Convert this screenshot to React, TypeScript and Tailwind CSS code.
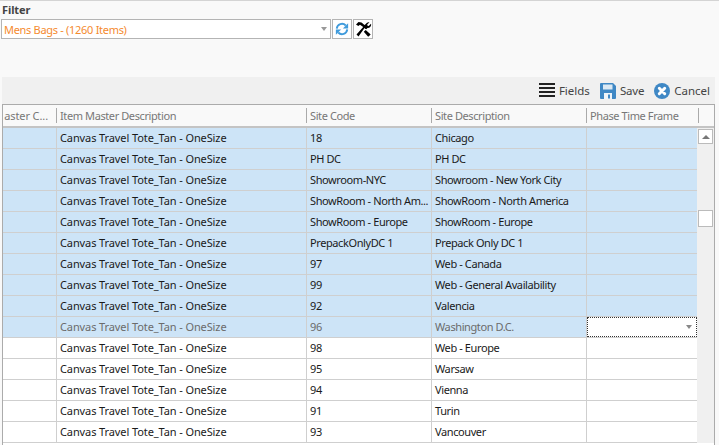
import React from "react";

const rows: [string, string, number][] = [
  ["18", "Chicago", 1],
  ["PH DC", "PH DC", 1],
  ["Showroom-NYC", "Showroom - New York City", 1],
  ["ShowRoom - North Am...", "ShowRoom - North America", 1],
  ["ShowRoom - Europe", "ShowRoom - Europe", 1],
  ["PrepackOnlyDC 1", "Prepack Only DC 1", 1],
  ["97", "Web - Canada", 1],
  ["99", "Web - General Availability", 1],
  ["92", "Valencia", 1],
  ["96", "Washington D.C.", 2],
  ["98", "Web - Europe", 0],
  ["95", "Warsaw", 0],
  ["94", "Vienna", 0],
  ["91", "Turin", 0],
  ["93", "Vancouver", 0],
];

function Refresh() {
  return (
    <svg width="14" height="14" viewBox="0 0 16 16" fill="none">
      <path d="M2 7.500A6 6 0 0 1 12.300 4" stroke="#3f9bdc" strokeWidth="2.200" />
      <path d="M14 8.500A6 6 0 0 1 3.700 12" stroke="#3f9bdc" strokeWidth="2.200" />
      <path d="M15 1.500v6h-6z" fill="#3f9bdc" />
      <path d="M1 14.500v-6h6z" fill="#3f9bdc" />
    </svg>
  );
}

function Tools() {
  return (
    <svg width="17" height="17" viewBox="0 0 17 17" fill="#000">
      <path d="M1 3.500 3.500 1l3 .5 3 2.500 1.500-1 1.200 1.200-1 1 1 1-1.700 1.700-1-1L3.500 15.500 1.500 13.500 8.200 6 5 3.700 3.300 5z" />
      <path d="M16 2.800 13.700 5l-1.200-.3-.3-1.200L14.500 1.200A3.300 3.300 0 0 0 10.600 4.800L9.200 6.300l2 2 1.300-1.300A3.300 3.300 0 0 0 16 2.800z" />
      <path d="M8.800 10.800l4.400 5 2.500-2.300-5-4.600z" />
    </svg>
  );
}

function Lines() {
  return (
    <svg width="16" height="15" viewBox="0 0 16 15" fill="#222">
      <rect x="0" y="0" width="16" height="2" />
      <rect x="0" y="4" width="16" height="2" />
      <rect x="0" y="8" width="16" height="2" />
      <rect x="0" y="12" width="16" height="2" />
    </svg>
  );
}

function Disk() {
  return (
    <svg width="16" height="16" viewBox="0 0 16 16">
      <path d="M1 0h12l3 3v12a1 1 0 0 1-1 1H1a1 1 0 0 1-1-1V1a1 1 0 0 1 1-1z" fill="#3f88c5" />
      <rect x="3" y="1.500" width="9.500" height="5" fill="#dbe9f4" />
      <rect x="4" y="10" width="8" height="6" fill="#eef4f9" />
      <rect x="8" y="11.500" width="2" height="4" fill="#3f88c5" />
    </svg>
  );
}

function Cancel() {
  return (
    <svg width="16" height="16" viewBox="0 0 16 16">
      <circle cx="8" cy="8" r="8" fill="#3f88c5" />
      <path d="M5.300 5.300l5.400 5.400M10.700 5.300l-5.400 5.400" stroke="#fff" strokeWidth="3" strokeLinecap="round" />
    </svg>
  );
}

export default function App() {
  return (
    <div
      className="w-[719px] h-[445px] overflow-hidden bg-[#f9f9f9] text-[11px] leading-none text-[#1a1a1a] flex flex-col"
      style={{ fontFamily: '"Noto Sans", "DejaVu Sans", sans-serif' }}
    >
      <div className="h-px bg-[#d4d4d4]" />
      <div className="pl-[1px] pt-[2px] h-[76px]">
        <div className="font-bold text-[11px] text-[#444] h-[14px] leading-[14px] pl-[1px] tracking-[-0.1px]">Filter</div>
        <div className="flex mt-[2px] gap-px">
          <div className="w-[330px] h-[20px] bg-white border border-[#b4b4b4] flex items-center justify-between pl-[2px] pr-[3px]">
            <span className="text-[#f58a2e] text-[11px] tracking-[-0.3px]">Mens Bags - (1260 Items)</span>
            <span className="w-0 h-0 border-x-[3.5px] border-x-transparent border-t-[4px] border-t-[#999]" />
          </div>
          <button className="w-[20px] h-[20px] bg-white border border-[#b4b4b4] flex items-center justify-center">
            <Refresh />
          </button>
          <button className="w-[20px] h-[20px] bg-white border border-[#b4b4b4] flex items-center justify-center">
            <Tools />
          </button>
        </div>
      </div>
      <div className="ml-[2px] mr-[4px] h-[27px] bg-[#f0f0f0] flex items-center justify-end gap-[10px] pr-[5px] text-[11.5px] text-[#444]">
        <span className="flex items-center gap-[4px]"><Lines />Fields</span>
        <span className="flex items-center gap-[4px] tracking-[-0.2px]"><Disk />Save</span>
        <span className="flex items-center gap-[4px]"><Cancel />Cancel</span>
      </div>
      <div className="ml-[2px] mr-[4px] border-x border-[#ababab] border-t border-t-[#ababab] flex-1 bg-white overflow-hidden">
        <div className="flex h-[23px] border-b-2 border-[#c4c4c4] bg-[#f9f9f9] text-[#777] text-[11px] tracking-[-0.4px]">
          <div className="w-[54px] flex-none overflow-hidden flex items-center justify-end pr-[9px] whitespace-nowrap tracking-[-0.1px]">aster C...</div>
          <HeaderCell w="w-[250px]">Item Master Description</HeaderCell>
          <HeaderCell w="w-[125px]">Site Code</HeaderCell>
          <HeaderCell w="w-[155px]">Site Description</HeaderCell>
          <HeaderCell w="w-[111px]">Phase Time Frame</HeaderCell>
          <div className="w-px my-[3px] bg-[#aaa]" />
        </div>
        <div className="flex">
          <div className="w-[694px] flex-none">
            {rows.map((r, i) => (
              <Row key={i} code={r[0]} desc={r[1]} state={r[2]} />
            ))}
          </div>
          <div className="flex-1 bg-[#f0f0f0] relative">
            <div className="absolute left-[1px] top-px w-[15px] h-[15px] bg-white border border-[#bbb] flex items-center justify-center">
              <span className="w-0 h-0 border-x-[4px] border-x-transparent border-b-[4px] border-b-[#777]" />
            </div>
            <div className="absolute left-[1px] top-[82px] w-[15px] h-[17px] bg-white border border-[#bbb]" />
          </div>
        </div>
      </div>
    </div>
  );
}

function HeaderCell({ w, children }: { w: string; children: React.ReactNode }) {
  return (
    <div className={`${w} flex-none flex items-center relative pl-[3px] whitespace-nowrap`}>
      <span className="absolute left-[-1px] top-[3px] bottom-[3px] w-px bg-[#aaa]" />
      {children}
    </div>
  );
}

function Row({ code, desc, state }: { code: string; desc: string; state: number }) {
  const bg = state === 0 ? "bg-white" : "bg-[#cde4f7]";
  const text = state === 2 ? "text-[#6b6b6b]" : "text-[#1a1a1a]";
  const cell = "flex-none h-full flex items-center pl-[3px] pb-px border-r border-[#cfcfcf] whitespace-nowrap overflow-hidden";
  return (
    <div className={`flex h-[21px] border-b border-[#cfcfcf] text-[11px] ${bg} ${text}`}>
      <div className="w-[54px] flex-none h-full border-r border-[#cfcfcf]" />
      <div className={`w-[250px] tracking-[-0.1px] ${cell}`}>Canvas Travel Tote_Tan - OneSize</div>
      <div className={`w-[125px] tracking-[-0.4px] ${cell}`}>{code}</div>
      <div className={`w-[155px] tracking-[-0.4px] ${cell}`}>{desc}</div>
      {state === 2 ? (
        <div className="w-[110px] flex-none h-full bg-white border border-dotted border-[#333] flex items-center justify-end pr-[4px]">
          <span className="w-0 h-0 border-x-[3.5px] border-x-transparent border-t-[4px] border-t-[#888]" />
        </div>
      ) : (
        <div className="w-[110px] flex-none h-full" />
      )}
    </div>
  );
}
